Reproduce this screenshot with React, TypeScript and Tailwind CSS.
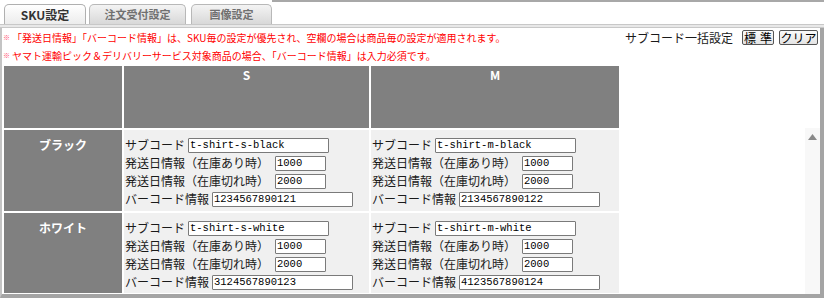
import React from "react";

const FONT = { fontFamily: '"Noto Sans CJK JP", "Noto Sans", sans-serif' };
const MONO = { fontFamily: '"Liberation Mono", "DejaVu Sans Mono", monospace' };

interface Sku {
  subCode: string;
  inStock: string;
  outStock: string;
  barcode: string;
}

const rows: { color: string; cells: Sku[] }[] = [
  {
    color: "ブラック",
    cells: [
      { subCode: "t-shirt-s-black", inStock: "1000", outStock: "2000", barcode: "1234567890121" },
      { subCode: "t-shirt-m-black", inStock: "1000", outStock: "2000", barcode: "2134567890122" },
    ],
  },
  {
    color: "ホワイト",
    cells: [
      { subCode: "t-shirt-s-white", inStock: "1000", outStock: "2000", barcode: "3124567890123" },
      { subCode: "t-shirt-m-white", inStock: "1000", outStock: "2000", barcode: "4123567890124" },
    ],
  },
];

function Field({ label, value, width, gap }: { label: string; value: string; width: string; gap: string }) {
  return (
    <div className={`flex h-[18px] items-center ${gap} text-[12px] text-[#1a1a1a] whitespace-nowrap`}>
      <span>{label}</span>
      <input
        readOnly
        value={value}
        style={MONO}
        className={`${width} h-[15px] border border-[#7a7a7a] rounded-[1px] bg-white px-[1px] text-[10.5px] leading-[13px] text-black outline-none`}
      />
    </div>
  );
}

function SkuCell({ sku }: { sku: Sku }) {
  return (
    <div className="flex flex-col pl-[1px] pt-[6px]">
      <Field label="サブコード" value={sku.subCode} width="w-[141px]" gap="gap-[3px]" />
      <Field label="発送日情報（在庫あり時）" value={sku.inStock} width="w-[51px]" gap="gap-[6px]" />
      <Field label="発送日情報（在庫切れ時）" value={sku.outStock} width="w-[51px]" gap="gap-[6px]" />
      <Field label="バーコード情報" value={sku.barcode} width="w-[141px]" gap="gap-[3px]" />
    </div>
  );
}

export default function App() {
  return (
    <div className="w-[824px] h-[298px] bg-white flex flex-col overflow-hidden" style={FONT}>
      {/* tabs */}
      <div className="flex h-[24px] items-end">
        <div className="ml-[4px] w-[82px] h-[20px] flex items-center justify-center border border-b-0 border-[#b0b0b0] rounded-t-[5px] bg-gradient-to-b from-white to-[#ececec] text-[12px] font-bold text-[#333]">
          SKU設定
        </div>
        <div className="ml-[3px] w-[97px] h-[20px] flex items-center justify-center border border-b-0 border-[#b8b8b8] rounded-t-[5px] bg-gradient-to-b from-[#f4f4f4] to-[#d8d8d8] text-[11px] font-bold text-[#707070]">
          注文受付設定
        </div>
        <div className="ml-[5px] w-[81px] h-[20px] flex items-center justify-center border border-b-0 border-[#b8b8b8] rounded-t-[5px] bg-gradient-to-b from-[#f4f4f4] to-[#d8d8d8] text-[11px] font-bold text-[#707070]">
          画像設定
        </div>
        <div className="flex-1 self-stretch border-t-2 border-[#a8a8a8]" />
      </div>
      <div className="h-[4px] border-t border-b border-[#c8c8c8] bg-[#e8e8e8]" />

      {/* body */}
      <div className="flex-1 min-h-0 flex flex-col border-l-2 border-l-[#c4c4c4] border-r-4 border-r-[#a4a4a4] border-b-4 border-b-[#a4a4a4]">
        <div className="flex justify-between">
          <div className="flex flex-col pl-[1px] text-[10px] text-[#ff0000]">
            <div className="h-[18px] flex items-center gap-[2px]">
              <span className="text-[7px] text-[#ff4d6d]">※</span>
              <span>「発送日情報」「バーコード情報」は、SKU毎の設定が優先され、空欄の場合は商品毎の設定が適用されます。</span>
            </div>
            <div className="h-[18px] flex items-center gap-[2px]">
              <span className="text-[7px] text-[#ff4d6d]">※</span>
              <span>ヤマト運輸ピック＆デリバリーサービス対象商品の場合、「バーコード情報」は入力必須です。</span>
            </div>
          </div>
          <div className="h-[18px] flex items-center pr-[2px] pt-[1px] text-[12px] text-[#1a1a1a] whitespace-nowrap">
            <span className="mr-[9px]">サブコード一括設定</span>
            <button className="h-[15px] w-[32px] flex items-center justify-center gap-[4px] border border-[#555] rounded-[2px] bg-gradient-to-b from-[#fafafa] to-[#e4e4e4] text-[12px] leading-none text-black">
              <span>標</span>
              <span>準</span>
            </button>
            <button className="ml-[5px] h-[15px] w-[39px] flex items-center justify-center border border-[#555] rounded-[2px] bg-gradient-to-b from-[#fafafa] to-[#e4e4e4] text-[12px] leading-none text-black">
              クリア
            </button>
          </div>
        </div>

        <div className="flex-1 min-h-0 flex">
          <div className="flex-1 min-w-0 overflow-hidden">
            <table className="border-separate border-spacing-[2px] table-fixed">
              <tbody>
                <tr>
                  <td className="w-[118px] h-[62px] p-0 bg-[#808080]" />
                  <td className="w-[245px] h-[62px] p-0 pt-[1px] bg-[#808080] align-top text-center text-[12px] leading-[16px] font-bold text-white">
                    S
                  </td>
                  <td className="w-[248px] h-[62px] p-0 pt-[1px] bg-[#808080] align-top text-center text-[12px] leading-[16px] font-bold text-white">
                    M
                  </td>
                </tr>
                {rows.map((row, i) => (
                  <tr key={row.color}>
                    <td
                      className={`${i === 0 ? "h-[81px]" : "h-[80px]"} p-0 pt-[6px] bg-[#808080] align-top text-center text-[12px] leading-[18px] font-bold text-white`}
                    >
                      {row.color}
                    </td>
                    {row.cells.map((sku) => (
                      <td key={sku.subCode} className="p-0 bg-[#f0f0f0] align-top">
                        <SkuCell sku={sku} />
                      </td>
                    ))}
                  </tr>
                ))}
              </tbody>
            </table>
          </div>
          <div className="w-[15px] flex flex-col">
            <div className="h-[64px]" />
            <div className="flex-1 bg-[#f8f8f8] flex justify-center pt-[6px]">
              <svg width="9" height="6" viewBox="0 0 9 6">
                <path d="M4.5 0 L9 6 L0 6 Z" fill="#8a8a8a" />
              </svg>
            </div>
          </div>
        </div>
      </div>
    </div>
  );
}
